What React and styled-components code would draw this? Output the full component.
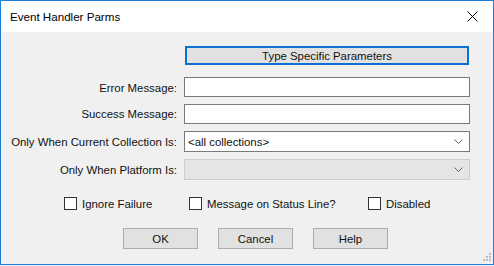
import styled, { createGlobalStyle } from "styled-components";

const Global = createGlobalStyle`
    html, body {
        margin: 0;
        padding: 0;
        background: #f0f0f0;
    }
    body {
        font-family: "Liberation Sans", Arial, sans-serif;
        font-size: 11.4px;
        color: #111;
    }
`;

const Chevron = () => (
    <svg width="9" height="5" viewBox="0 0 9 5">
        <path d="M0.5 0.5 L4.5 4.5 L8.5 0.5" fill="none" stroke="#606060" strokeWidth="1" />
    </svg>
);

const CloseIcon = () => (
    <svg width="11" height="11" viewBox="0 0 11 11">
        <path d="M0.5 0.5 L10.5 10.5 M10.5 0.5 L0.5 10.5" stroke="#000" strokeWidth="1" />
    </svg>
);

const Grip = () => (
    <svg width="10" height="10" viewBox="0 0 10 10">
        {[
            [8, 0],
            [8, 3],
            [5, 3],
            [8, 6],
            [5, 6],
            [2, 6],
        ].map(([x, y], i) => (
            <rect key={i} x={x} y={y + 1} width="2" height="2" fill="#bcbcbc" />
        ))}
    </svg>
);

const Window = styled.div`
    width: 494px;
    height: 265px;
    box-sizing: border-box;
    border: 1px solid #1a7fd4;
    display: flex;
    flex-direction: column;
    background: #f0f0f0;
`;
const TitleBar = styled.div`
    height: 31px;
    background: #fff;
    display: flex;
    align-items: center;
    justify-content: space-between;
    padding: 0 0 0 9px;
`;
const Title = styled.div`
    font-size: 11.6px;
    color: #000;
    padding-bottom: 1px;
`;
const CloseBox = styled.div`
    width: 34px;
    height: 31px;
    display: flex;
    align-items: center;
    justify-content: center;
    margin-right: 4px;
`;
const Body = styled.div`
    flex: 1;
    position: relative;
    padding-top: 14px;
`;
const Form = styled.div`
    display: grid;
    grid-template-columns: 176px 286px;
    column-gap: 7px;
    row-gap: 7px;
    align-items: center;
`;
const Label = styled.div`
    text-align: right;
    white-space: nowrap;
    margin-top: ${(p) => (p.$top ? p.$top - 7 : 0)}px;
`;
const TypeButton = styled.div`
    height: 19px;
    margin: 0 1px;
    box-sizing: border-box;
    border: 2px solid #0b70cf;
    background: #e1e1e1;
    display: flex;
    align-items: center;
    justify-content: center;
`;
const TextBox = styled.div`
    height: 20px;
    box-sizing: border-box;
    background: #fff;
    border: 1px solid #7a7a7a;
    margin-top: ${(p) => (p.$top ? p.$top - 8 : 0)}px;
`;
const Combo = styled.div`
    height: 21px;
    box-sizing: border-box;
    background: ${(p) => (p.$disabled ? "#e5e5e5" : "#fff")};
    border: 1px solid ${(p) => (p.$disabled ? "#cccccc" : "#7a7a7a")};
    display: flex;
    align-items: center;
    justify-content: space-between;
    padding: 0 6px 0 3px;
`;
const CheckRow = styled.div`
    display: flex;
    padding-left: 63px;
    margin-top: 17px;
    height: 13px;
    align-items: center;
`;
const CheckItem = styled.div`
    display: flex;
    align-items: center;
    gap: 5px;
    white-space: nowrap;
    width: ${(p) => (p.$width ? `${p.$width}px` : "auto")};
`;
const Box = styled.div`
    width: 13px;
    height: 13px;
    box-sizing: border-box;
    border: 1px solid #333;
    background: #fff;
`;
const ButtonRow = styled.div`
    display: flex;
    gap: 20px;
    padding-left: 122px;
    margin-top: 18px;
`;
const Button = styled.div`
    width: 75px;
    height: 21px;
    box-sizing: border-box;
    border: 1px solid #adadad;
    background: #e1e1e1;
    display: flex;
    align-items: center;
    justify-content: center;
`;
const GripWrap = styled.div`
    position: absolute;
    right: 2px;
    bottom: 2px;
    line-height: 0;
`;

const App = () => {
    return (
        <Window>
            <Global />
            <TitleBar>
                <Title>Event Handler Parms</Title>
                <CloseBox>
                    <CloseIcon />
                </CloseBox>
            </TitleBar>
            <Body>
                <Form>
                    <span />
                    <TypeButton>Type Specific Parameters</TypeButton>
                    <Label $top={13}>Error Message:</Label>
                    <TextBox $top={13} />
                    <Label>Success Message:</Label>
                    <TextBox />
                    <Label>Only When Current Collection Is:</Label>
                    <Combo>
                        <span>&lt;all collections&gt;</span>
                        <Chevron />
                    </Combo>
                    <Label>Only When Platform Is:</Label>
                    <Combo $disabled>
                        <span />
                        <Chevron />
                    </Combo>
                </Form>
                <CheckRow>
                    <CheckItem $width={125}>
                        <Box />
                        Ignore Failure
                    </CheckItem>
                    <CheckItem $width={179}>
                        <Box />
                        Message on Status Line?
                    </CheckItem>
                    <CheckItem>
                        <Box />
                        Disabled
                    </CheckItem>
                </CheckRow>
                <ButtonRow>
                    <Button>OK</Button>
                    <Button>Cancel</Button>
                    <Button>Help</Button>
                </ButtonRow>
                <GripWrap>
                    <Grip />
                </GripWrap>
            </Body>
        </Window>
    );
};

export default App;
